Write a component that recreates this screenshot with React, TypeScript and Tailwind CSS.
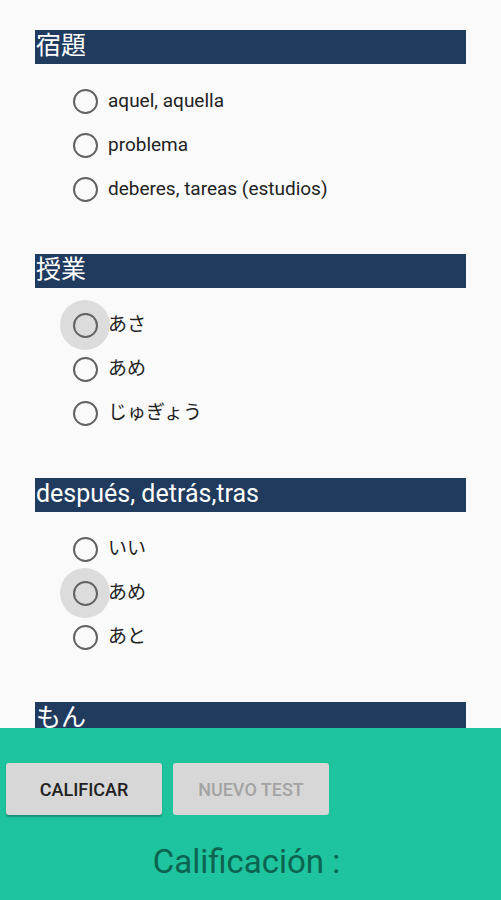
import React from 'react';

type Question = {
  id: number;
  title: string;
  options: string[];
  focused?: number;
};

const questions: Question[] = [
  { id: 1, title: "宿題", options: ["aquel, aquella", "problema", "deberes, tareas (estudios)"] },
  { id: 2, title: "授業", options: ["あさ", "あめ", "じゅぎょう"], focused: 0 },
  { id: 3, title: "después, detrás,tras", options: ["いい", "あめ", "あと"], focused: 1 },
  { id: 4, title: "もん", options: [] },
];

const font = { fontFamily: 'Roboto, "Noto Sans CJK JP", sans-serif' };

const Radio = ({ focused }: { focused: boolean }) => (
  <div className="relative w-[50px] h-[50px] flex items-center justify-center">
    {focused && <div className="absolute inset-0 rounded-full bg-[#dcdcdc]"></div>}
    <div className="relative w-[25px] h-[25px] rounded-full border-[2.5px] border-[#626262]"></div>
  </div>
);

export default function App() {
  return (
    <div className="h-[900px] w-full flex flex-col bg-[#fafafa] overflow-hidden" style={font}>
      {/* Questions list */}
      <div className="flex-1 overflow-hidden pt-[30px] px-[35px]">
        {questions.map((q) => (
          <div key={q.id} className="mb-[43px]">
            <div className="h-[34px] bg-[#203b5e] text-white text-[25px] leading-[32px] pl-[1px] w-[431px] whitespace-nowrap overflow-hidden">
              {q.title}
            </div>
            <div className="mt-[15px] flex flex-col">
              {q.options.map((opt, i) => (
                <div key={opt + i} className="h-[44px] flex items-center pl-[25px]">
                  <Radio focused={q.focused === i} />
                  <span className="ml-[-2px] text-[19px] text-[#222]">{opt}</span>
                </div>
              ))}
            </div>
          </div>
        ))}
      </div>

      {/* Bottom panel */}
      <div className="h-[172px] bg-[#1ec49e] flex flex-col">
        <div className="flex gap-[11px] pl-[6px] pt-[35px]">
          <button className="w-[156px] h-[52px] rounded-[3px] bg-[#d7d7d7] text-[#222] text-[18px] font-medium shadow-[0_2px_2px_rgba(0,0,0,0.25)]">
            CALIFICAR
          </button>
          <button className="w-[156px] h-[52px] rounded-[3px] bg-[#d7d7d7] text-[#a3a3a3] text-[18px] font-medium">
            NUEVO TEST
          </button>
        </div>
        <div className="mt-[22px] text-center pr-[8px] text-[33px] text-[#0b5a48] opacity-90">Calificación :</div>
      </div>
    </div>
  );
}
